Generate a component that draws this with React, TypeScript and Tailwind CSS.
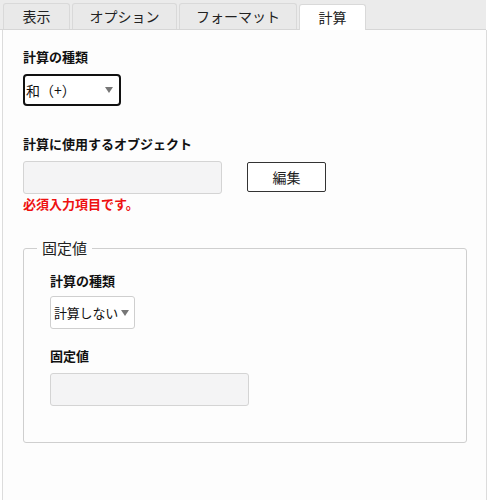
import React from "react";

const font = { fontFamily: '"Noto Sans CJK JP", "Noto Sans", sans-serif' };

function Caret() {
  return (
    <svg width="8" height="6" viewBox="0 0 8 6" className="shrink-0">
      <path d="M0 0 L8 0 L4 6 Z" fill="#777" />
    </svg>
  );
}

export default function App() {
  const tabs = [
    { label: "表示", w: "w-[67px]" },
    { label: "オプション", w: "w-[105px]" },
    { label: "フォーマット", w: "w-[118px]" },
  ];
  return (
    <div className="w-[489px] h-[500px] bg-white text-[#111] overflow-hidden" style={font}>
      <div className="h-[30px] bg-[#ebebeb] border-b border-[#d6d6d6] flex items-end pl-[3px] gap-[2px] mr-[3px]">
        {tabs.map((t) => (
          <div
            key={t.label}
            className={`${t.w} h-[26px] bg-[#e9e9e9] border border-b-0 border-[#d9d9d9] rounded-t-[3px] flex items-center justify-center text-[14px] text-[#222]`}
          >
            {t.label}
          </div>
        ))}
        <div className="w-[67px] h-[26px] mb-[-1px] bg-white border border-b-0 border-[#d9d9d9] rounded-t-[3px] flex items-center justify-center text-[14px] text-[#222]">
          計算
        </div>
      </div>
      <div className="ml-[2px] mr-[2px] h-[470px] border-l border-r border-[#dcdcdc] bg-[#fdfdfd] pl-[20px] pt-[18px]">
        <div className="text-[13px] font-bold leading-[18px]">計算の種類</div>
        <div className="mt-[8px] w-[98px] h-[32px] border-2 border-[#111] rounded-[4px] flex items-center justify-between pl-[1px] pr-[6px] bg-white">
          <span className="text-[14px] whitespace-nowrap">和（+）</span>
          <Caret />
        </div>

        <div className="mt-[29px] text-[13px] font-bold leading-[18px]">計算に使用するオブジェクト</div>
        <div className="mt-[8px] flex items-start">
          <div className="w-[199px] h-[33px] bg-[#f4f4f5] border border-[#d4d4d4] rounded-[3px]" />
          <div className="ml-[25px] mt-[1px] w-[79px] h-[30px] border border-[#333] rounded-[2px] bg-white flex items-center justify-center text-[14px] text-[#222]">
            編集
          </div>
        </div>
        <div className="mt-[1px] text-[13px] font-bold text-[#ee1111] leading-[18px]">必須入力項目です。</div>

        <fieldset className="mt-[25px] w-[444px] h-[205px] border border-[#cfcfcf] rounded-[3px] pl-[26px] pr-[10px] m-0 min-w-0">
          <legend className="px-[5px] ml-[-13px] text-[15px] text-[#222] leading-[20px]">固定値</legend>
          <div className="mt-[14px] text-[13px] font-bold leading-[18px]">計算の種類</div>
          <div className="mt-[6px] w-[85px] h-[33px] border border-[#cfcfcf] rounded-[3px] bg-white flex items-center justify-between pl-[3px] pr-[5px]">
            <span className="text-[13px] whitespace-nowrap tracking-[-0.2px]">計算しない</span>
            <Caret />
          </div>
          <div className="mt-[18px] text-[13px] font-bold leading-[18px]">固定値</div>
          <div className="mt-[8px] w-[199px] h-[33px] bg-[#f4f4f5] border border-[#d4d4d4] rounded-[3px]" />
        </fieldset>
      </div>
    </div>
  );
}
